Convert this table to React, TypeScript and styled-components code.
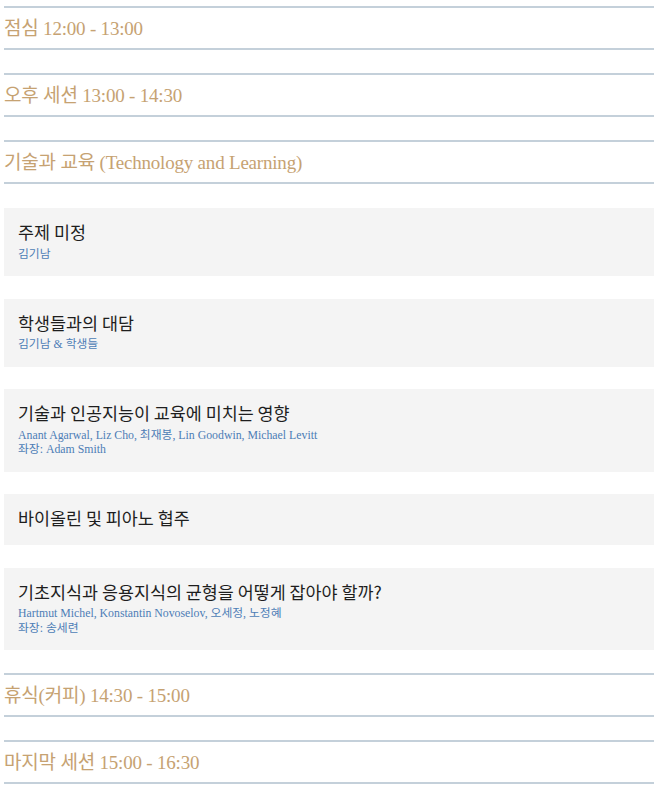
import React from 'react';
import styled, { createGlobalStyle } from 'styled-components';

type Talk = {
    title: string;
    speakers?: string;
    chair?: string;
};

type Entry =
    | { kind: 'heading'; text: string }
    | { kind: 'talk'; talk: Talk };

const GlobalStyle = createGlobalStyle`
    html, body {
        margin: 0;
        padding: 0;
        background: #ffffff;
    }
`;

const Page = styled.div`
    display: flex;
    flex-direction: column;
    padding: 6px 9px 20px 4px;
`;

const Heading = styled.h3`
    box-sizing: border-box;
    margin: 0 0 23px;
    height: 44px;
    padding-bottom: 3px;
    display: flex;
    align-items: center;
    border-top: 2px solid #c4d0da;
    border-bottom: 2px solid #c4d0da;
    font-family: 'Liberation Serif', 'Noto Sans CJK KR', serif;
    font-size: 19px;
    font-weight: 400;
    color: #c6a272;
    letter-spacing: -0.2px;
`;

const Card = styled.div`
    background: #f4f4f4;
    padding: 12px 14px 15px;
    margin-bottom: 22.5px;
    display: flex;
    flex-direction: column;

    ${Heading} + & {
        margin-top: 1px;
    }
`;

const Title = styled.div`
    font-family: 'Noto Sans CJK KR', 'Noto Sans', sans-serif;
    font-size: 17.4px;
    line-height: 24px;
    height: 24px;
    color: #1e1e1e;
`;

const Meta = styled.div<{ first?: boolean }>`
    font-family: 'Liberation Serif', 'Noto Sans CJK KR', serif;
    font-size: 11.8px;
    line-height: 14.5px;
    height: 14.5px;
    color: #4d7db6;
    margin-top: ${props => (props.first ? '2.5px' : '0')};
`;

const entries: Entry[] = [
    { kind: 'heading', text: '점심 12:00 - 13:00' },
    { kind: 'heading', text: '오후 세션 13:00 - 14:30' },
    { kind: 'heading', text: '기술과 교육 (Technology and Learning)' },
    { kind: 'talk', talk: { title: '주제 미정', speakers: '김기남' } },
    { kind: 'talk', talk: { title: '학생들과의 대담', speakers: '김기남 & 학생들' } },
    {
        kind: 'talk',
        talk: {
            title: '기술과 인공지능이 교육에 미치는 영향',
            speakers: 'Anant Agarwal, Liz Cho, 최재봉, Lin Goodwin, Michael Levitt',
            chair: '좌장: Adam Smith',
        },
    },
    { kind: 'talk', talk: { title: '바이올린 및 피아노 협주' } },
    {
        kind: 'talk',
        talk: {
            title: '기초지식과 응용지식의 균형을 어떻게 잡아야 할까?',
            speakers: 'Hartmut Michel, Konstantin Novoselov, 오세정, 노정혜',
            chair: '좌장: 송세련',
        },
    },
    { kind: 'heading', text: '휴식(커피) 14:30 - 15:00' },
    { kind: 'heading', text: '마지막 세션 15:00 - 16:30' },
];

function TalkCard({ talk }: { talk: Talk }) {
    return (
        <Card>
            <Title>{talk.title}</Title>
            {talk.speakers && <Meta first>{talk.speakers}</Meta>}
            {talk.chair && <Meta>{talk.chair}</Meta>}
        </Card>
    );
}

export default function App() {
    return (
        <>
            <GlobalStyle />
            <Page>
                {entries.map((entry, index) =>
                    entry.kind === 'heading' ? (
                        <Heading key={index}>{entry.text}</Heading>
                    ) : (
                        <TalkCard key={index} talk={entry.talk} />
                    )
                )}
            </Page>
        </>
    );
}
